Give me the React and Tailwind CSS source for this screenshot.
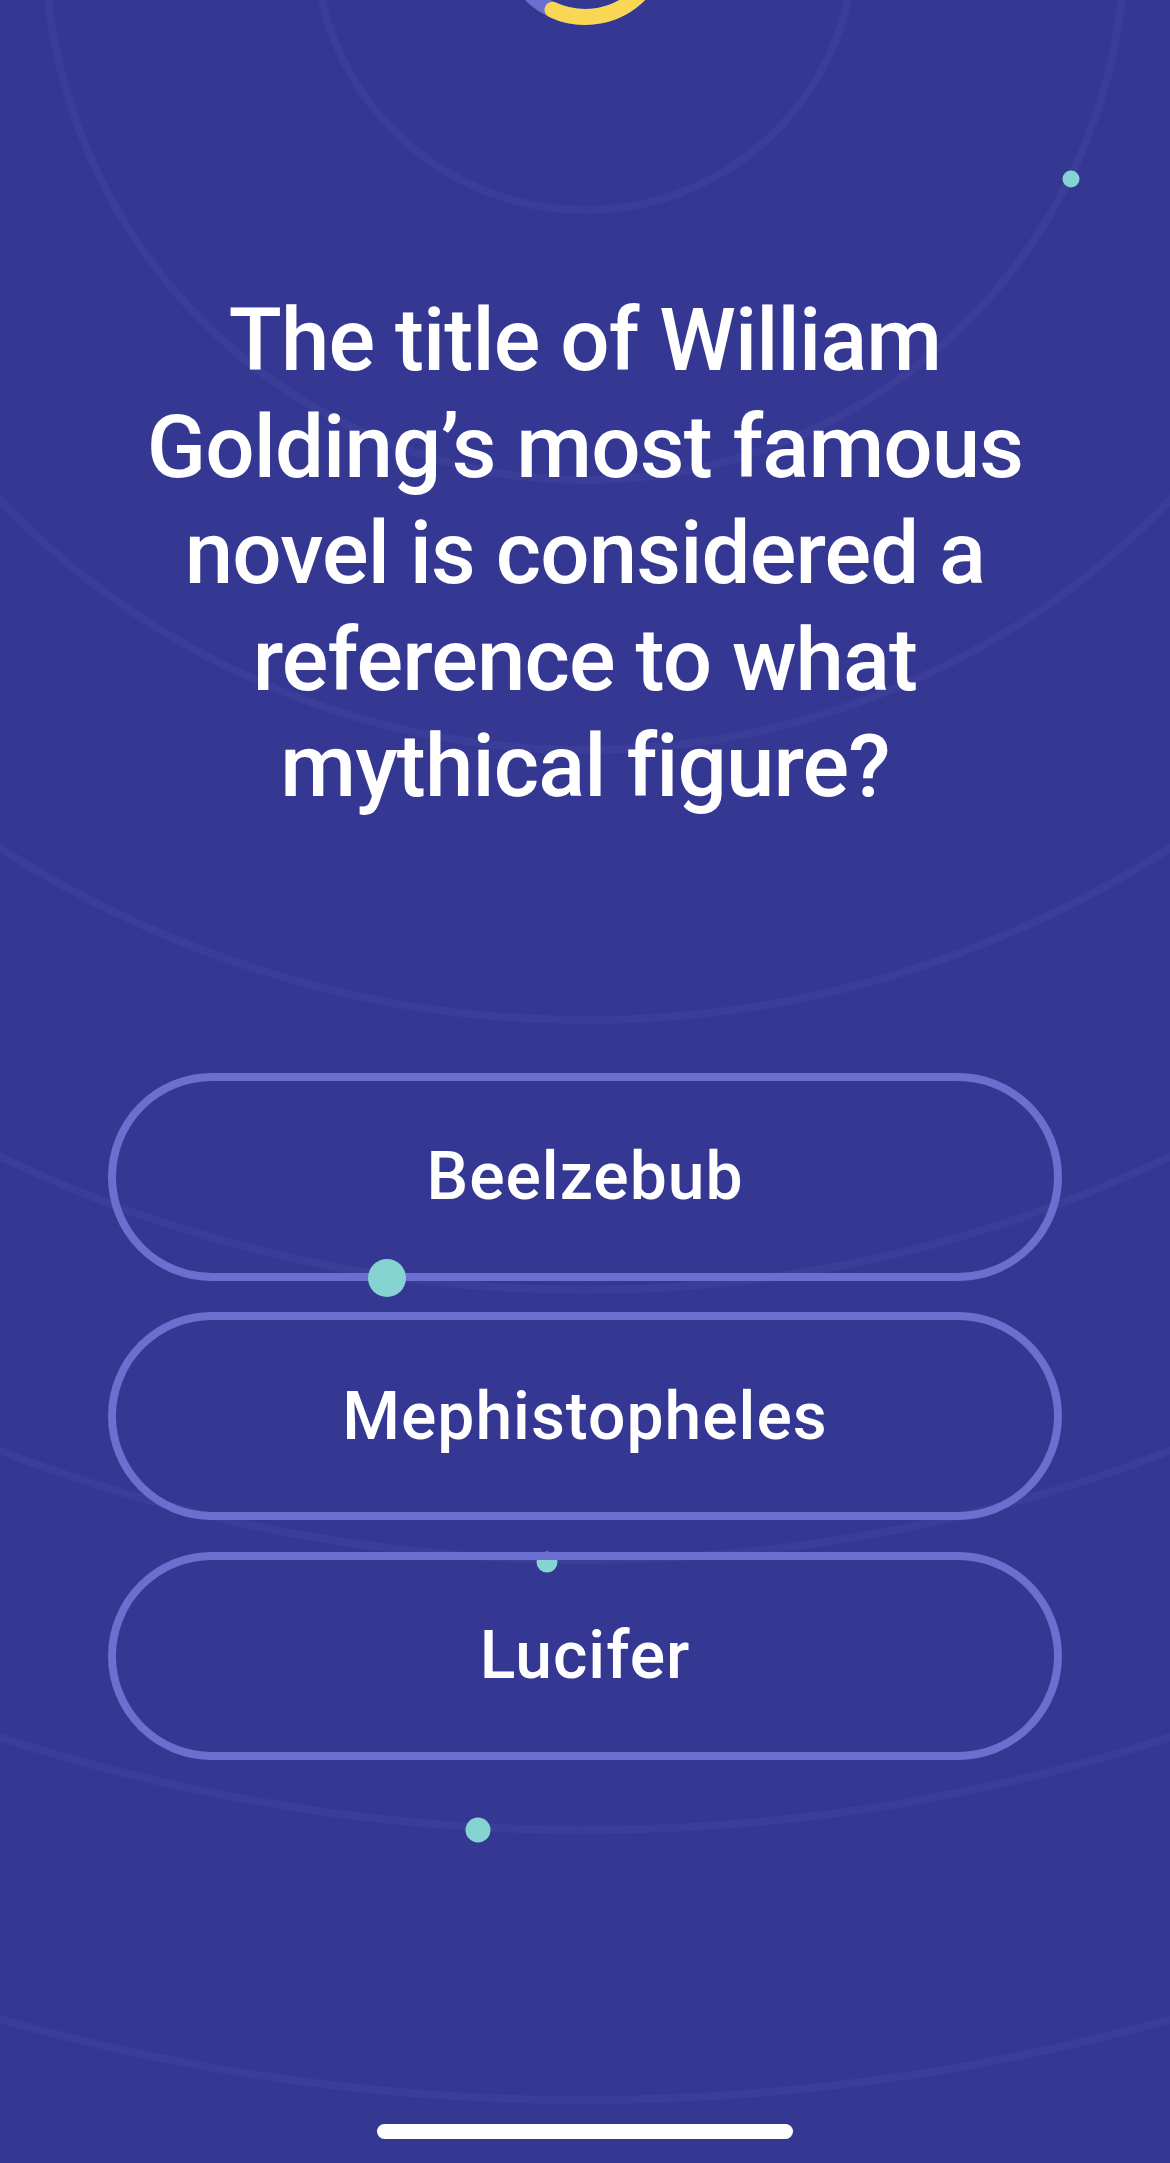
import React from "react";

const RINGS = [270, 540, 810, 1080, 1350, 1620, 1890, 2160];

const ANSWERS = ["Beelzebub", "Mephistopheles", "Lucifer"];

function Backdrop() {
  return (
    <svg
      className="absolute inset-0 z-0"
      width="1170"
      height="2163"
      viewBox="0 0 1170 2163"
    >
      {/* orbit rings */}
      {RINGS.map((r) => (
        <circle
          key={r}
          cx="585"
          cy="-60"
          r={r}
          fill="none"
          stroke="#3b3e99"
          strokeWidth="8"
        />
      ))}

      {/* timer ring, mostly off screen */}
      <circle cx="585" cy="-60" r="77" fill="none" stroke="#6b6fcf" strokeWidth="16" />
      <path
        d="M 552.5 9.8 A 77 77 0 0 0 651.7 -98.5"
        fill="none"
        stroke="#f9d654"
        strokeWidth="16"
        strokeLinecap="round"
      />

      {/* dots on the orbits */}
      <circle cx="1071" cy="179" r="8.5" fill="#86d4d2" />
      <circle cx="547" cy="1562" r="10.5" fill="#86d4d2" />
      <circle cx="478" cy="1830" r="12.5" fill="#86d4d2" />
    </svg>
  );
}

export default function App() {
  return (
    <div
      className="relative w-[1170px] h-[2163px] overflow-hidden bg-[#353892]"
      style={{ fontFamily: "Roboto, 'Noto Sans', sans-serif" }}
    >
      <Backdrop />

      <div className="relative z-10 flex flex-col items-center">
        {/* Pregunta */}
        <h1 className="mt-[287px] text-center text-white text-[87px] leading-[106.5px] font-medium tracking-[-0.01em]">
          The title of William
          <br />
          Golding’s most famous
          <br />
          novel is considered a
          <br />
          reference to what
          <br />
          mythical figure?
        </h1>

        {/* Respuestas */}
        <div className="mt-[253px] flex flex-col gap-[31.5px]">
          {ANSWERS.map((a) => (
            <button
              key={a}
              className="w-[954px] h-[208px] rounded-full border-[8px] border-[#6b6fcf] flex items-center justify-center text-white text-[66px] font-medium tracking-[0.015em]"
            >
              {a}
            </button>
          ))}
        </div>
      </div>

      {/* dot sitting on top of the first answer border */}
      <div className="absolute z-20 left-[368px] top-[1259px] w-[38px] h-[38px] rounded-full bg-[#86d4d2]" />

      {/* home indicator */}
      <div className="absolute z-20 left-[377px] bottom-[24px] w-[416px] h-[15px] rounded-full bg-white" />
    </div>
  );
}
